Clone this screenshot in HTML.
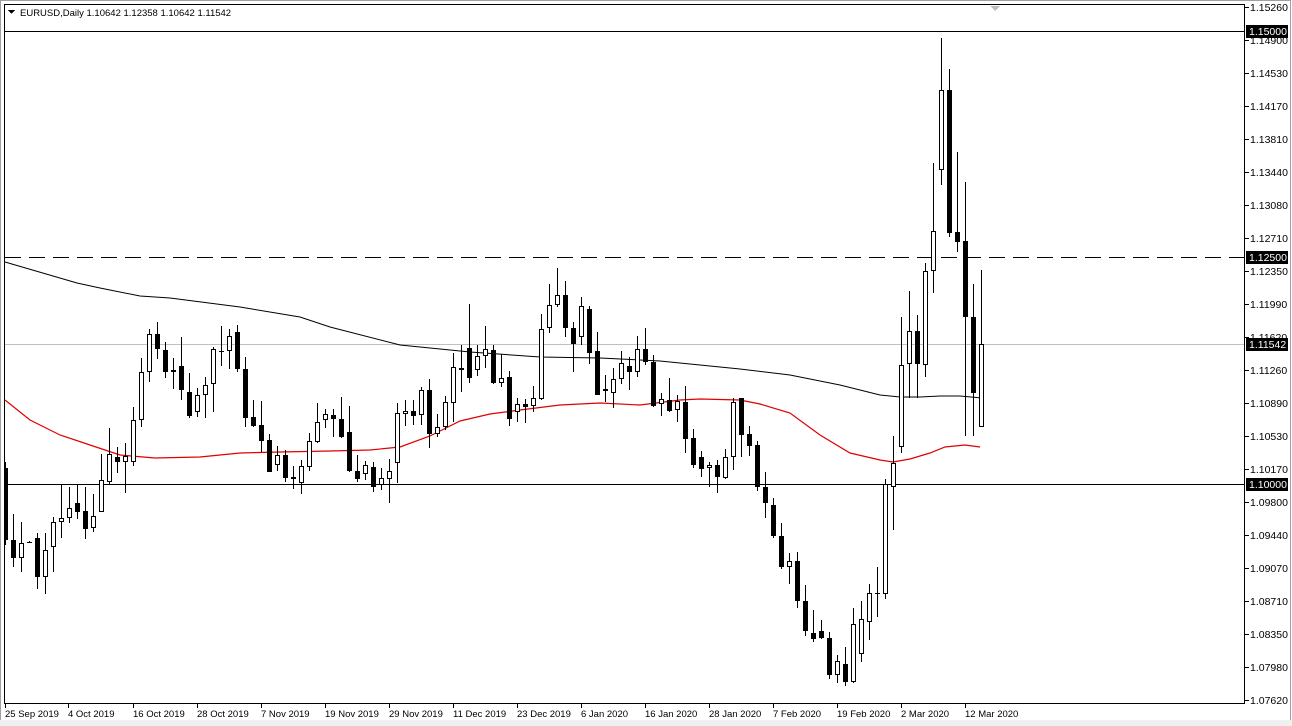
<!DOCTYPE html>
<html><head><meta charset="utf-8"><style>
html,body{margin:0;padding:0;background:#fff;}
body{width:1292px;height:726px;overflow:hidden;position:relative;font-family:"Liberation Sans",sans-serif;}
svg{position:absolute;left:0;top:0;}
text{font-family:"Liberation Sans",sans-serif;font-size:10.5px;fill:#000;}
.s{font-size:9.5px;}
</style></head><body>
<svg width="1292" height="726" viewBox="0 0 1292 726" shape-rendering="crispEdges">
<rect x="0" y="0" width="1292" height="726" fill="#fff"/>
<rect x="0.5" y="0.5" width="1290" height="724" fill="none" stroke="#a0a0a0"/>
<rect x="0" y="720" width="1292" height="6" fill="#f0f0f0"/>
<line x1="4" y1="4.5" x2="1244" y2="4.5" stroke="#000"/>
<line x1="4.5" y1="4" x2="4.5" y2="703" stroke="#000"/>
<line x1="4" y1="703.5" x2="1244" y2="703.5" stroke="#000"/>
<line x1="1244.5" y1="4" x2="1244.5" y2="704" stroke="#000"/>
<path d="M990 6h10l-5 5z" fill="#c0c0c0"/>
<line x1="5" y1="31.5" x2="1244" y2="31.5" stroke="#000"/>
<line x1="5" y1="257.5" x2="1244" y2="257.5" stroke="#000" stroke-dasharray="16,8"/>
<line x1="5" y1="344.5" x2="1244" y2="344.5" stroke="#c0c0c0"/>
<line x1="5" y1="484.5" x2="1244" y2="484.5" stroke="#000"/>
<polyline shape-rendering="auto" fill="none" stroke="#000" stroke-width="1" points="5,262 77,283 100,288 140,296 170,298 240,307 300,317 330,327 400,345 470,352 540,357 600,358 660,361 700,365 740,369 790,375 840,385 880,395 900,397 920,397 940,396 960,396 982,398"/>
<polyline shape-rendering="auto" fill="none" stroke="#e00000" stroke-width="1.2" points="5,400 30,420 60,435 90,445 120,455 155,458 200,457 240,453 280,452 330,451 370,450 400,447 430,436 460,421 490,414 520,410 560,405 600,403 640,405 680,400 700,399 740,400 760,404 790,413 820,435 850,453 880,460 893,462 910,459 930,453 945,447 965,445 980,447"/>
<path stroke="#000" fill="none" d="M5.5 462V545M13.5 514V567M21.5 522V572M29.5 541V543M37.5 533V589M45.5 533V594M53.5 517V572M61.5 484V538M69.5 487V523M77.5 484V519M85.5 487V539M93.5 494V532M101.5 454V512M109.5 428V485M117.5 447V473M125.5 443V493M133.5 407V466M141.5 358V427M149.5 329V382M157.5 322V359M165.5 342V378M173.5 358V389M181.5 337V400M189.5 373V418M197.5 388V417M205.5 377V418M213.5 347V412M221.5 326V366M229.5 329V369M237.5 325V372M245.5 357V427M253.5 400V427M261.5 401V452M269.5 434V472M277.5 446V471M285.5 450V482M293.5 466V489M301.5 460V494M309.5 433V471M317.5 403V443M325.5 409V428M333.5 409V437M341.5 397V438M349.5 406V472M357.5 455V482M365.5 461V480M373.5 462V492M381.5 468V490M389.5 459V503M397.5 403V483M405.5 400V426M413.5 400V425M421.5 387V425M429.5 379V448M437.5 414V437M445.5 396V430M453.5 353V422M461.5 345V392M469.5 304V383M477.5 345V376M485.5 326V368M493.5 345V384M501.5 354V387M509.5 371V426M517.5 398V422M525.5 399V423M533.5 386V412M541.5 314V400M549.5 284V333M557.5 268V307M565.5 281V337M573.5 322V372M581.5 297V345M589.5 306V364M597.5 332V395M605.5 375V402M613.5 368V408M621.5 351V384M629.5 357V390M637.5 336V377M645.5 328V365M653.5 355V407M661.5 393V416M669.5 378V412M677.5 395V422M685.5 386V453M693.5 429V468M701.5 451V477M709.5 462V487M717.5 460V493M725.5 449V479M733.5 398V470M741.5 398V457M749.5 426V456M757.5 441V491M765.5 472V518M773.5 498V538M781.5 523V569M789.5 553V584M797.5 552V608M805.5 585V636M813.5 610V642M821.5 620V639M829.5 632V679M837.5 655V683M845.5 647V686M853.5 608V683M861.5 601V662M869.5 584V640M877.5 567V617M885.5 479V599M893.5 436V530M901.5 317V453M909.5 291V398M917.5 315V398M925.5 263V377M933.5 163V293M941.5 38V185M949.5 69V237M957.5 152V252M965.5 182V436M973.5 284V436M981.5 270V427"/>
<path fill="#000" d="M5 468h3v72h-3zM11 540h5v18h-5zM27 542h5v1h-5zM35 538h5v39h-5zM75 503h5v9h-5zM83 511h5v18h-5zM115 457h5v5h-5zM155 334h5v15h-5zM163 350h5v22h-5zM171 370h5v2h-5zM179 366h5v24h-5zM187 392h5v24h-5zM219 351h5v1h-5zM235 332h5v37h-5zM243 369h5v49h-5zM251 417h5v9h-5zM259 425h5v16h-5zM267 440h5v32h-5zM283 455h5v23h-5zM291 477h5v2h-5zM331 415h5v4h-5zM339 419h5v18h-5zM347 432h5v39h-5zM355 471h5v8h-5zM371 467h5v20h-5zM411 411h5v5h-5zM427 390h5v44h-5zM459 368h5v2h-5zM467 348h5v30h-5zM491 350h5v33h-5zM507 377h5v42h-5zM523 404h5v3h-5zM563 295h5v33h-5zM571 328h5v16h-5zM587 309h5v44h-5zM595 351h5v44h-5zM603 389h5v2h-5zM627 366h5v6h-5zM643 349h5v13h-5zM651 362h5v44h-5zM667 400h5v11h-5zM683 402h5v37h-5zM691 438h5v27h-5zM699 457h5v12h-5zM715 465h5v12h-5zM739 398h5v37h-5zM747 434h5v12h-5zM755 445h5v42h-5zM763 487h5v16h-5zM771 505h5v31h-5zM779 536h5v31h-5zM795 561h5v40h-5zM803 601h5v30h-5zM811 633h5v6h-5zM819 631h5v7h-5zM827 638h5v37h-5zM843 664h5v18h-5zM875 593h5v1h-5zM915 331h5v33h-5zM947 90h5v143h-5zM955 232h5v10h-5zM963 241h5v76h-5zM971 317h5v76h-5z"/>
<path fill="#fff" stroke="#000" d="M19.5 543.5h4v14h-4zM43.5 550.5h4v26h-4zM51.5 522.5h4v24h-4zM59.5 518.5h4v3h-4zM67.5 508.5h4v9h-4zM91.5 516.5h4v11h-4zM99.5 480.5h4v31h-4zM107.5 454.5h4v27h-4zM123.5 456.5h4v5h-4zM131.5 420.5h4v41h-4zM139.5 372.5h4v47h-4zM147.5 334.5h4v37h-4zM195.5 395.5h4v16h-4zM203.5 385.5h4v9h-4zM211.5 349.5h4v34h-4zM227.5 336.5h4v14h-4zM275.5 455.5h4v9h-4zM299.5 466.5h4v16h-4zM307.5 441.5h4v25h-4zM315.5 422.5h4v19h-4zM323.5 414.5h4v5h-4zM363.5 465.5h4v8h-4zM379.5 478.5h4v6h-4zM387.5 471.5h4v7h-4zM395.5 413.5h4v49h-4zM403.5 411.5h4v2h-4zM419.5 390.5h4v24h-4zM435.5 427.5h4v6h-4zM443.5 402.5h4v24h-4zM451.5 367.5h4v35h-4zM475.5 356.5h4v13h-4zM483.5 349.5h4v6h-4zM499.5 378.5h4v4h-4zM515.5 404.5h4v7h-4zM531.5 398.5h4v7h-4zM539.5 329.5h4v69h-4zM547.5 305.5h4v22h-4zM555.5 295.5h4v9h-4zM579.5 306.5h4v30h-4zM611.5 379.5h4v13h-4zM619.5 363.5h4v15h-4zM635.5 349.5h4v22h-4zM659.5 399.5h4v4h-4zM675.5 401.5h4v8h-4zM707.5 465.5h4v2h-4zM723.5 457.5h4v20h-4zM731.5 402.5h4v54h-4zM787.5 561.5h4v5h-4zM835.5 661.5h4v13h-4zM851.5 624.5h4v57h-4zM859.5 619.5h4v34h-4zM867.5 593.5h4v28h-4zM883.5 484.5h4v109h-4zM891.5 463.5h4v23h-4zM899.5 365.5h4v81h-4zM907.5 331.5h4v32h-4zM923.5 271.5h4v93h-4zM931.5 231.5h4v39h-4zM939.5 90.5h4v79h-4zM979.5 344.5h4v82h-4z"/>
<path stroke="#000" d="M1245 7.5h4M1245 40.5h4M1245 73.5h4M1245 106.5h4M1245 139.5h4M1245 172.5h4M1245 205.5h4M1245 238.5h4M1245 271.5h4M1245 304.5h4M1245 337.5h4M1245 370.5h4M1245 403.5h4M1245 436.5h4M1245 469.5h4M1245 502.5h4M1245 535.5h4M1245 568.5h4M1245 601.5h4M1245 634.5h4M1245 667.5h4M1245 700.5h4M5.5 704v4M68.5 704v4M133.5 704v4M197.5 704v4M261.5 704v4M325.5 704v4M389.5 704v4M453.5 704v4M517.5 704v4M581.5 704v4M645.5 704v4M709.5 704v4M773.5 704v4M837.5 704v4M901.5 704v4M965.5 704v4"/>
<g>
<text x="1250" y="11">1.15260</text>
<text x="1250" y="44">1.14900</text>
<text x="1250" y="77">1.14530</text>
<text x="1250" y="110">1.14170</text>
<text x="1250" y="143">1.13810</text>
<text x="1250" y="176">1.13440</text>
<text x="1250" y="209">1.13080</text>
<text x="1250" y="242">1.12710</text>
<text x="1250" y="275">1.12350</text>
<text x="1250" y="308">1.11990</text>
<text x="1250" y="341">1.11620</text>
<text x="1250" y="374">1.11260</text>
<text x="1250" y="407">1.10890</text>
<text x="1250" y="440">1.10530</text>
<text x="1250" y="473">1.10170</text>
<text x="1250" y="506">1.09800</text>
<text x="1250" y="539">1.09440</text>
<text x="1250" y="572">1.09070</text>
<text x="1250" y="605">1.08710</text>
<text x="1250" y="638">1.08350</text>
<text x="1250" y="671">1.07980</text>
<text x="1250" y="704">1.07620</text>
</g>
<rect x="1246" y="25" width="42" height="13" fill="#000"/><text x="1249" y="35" style="fill:#fff">1.15000</text>
<rect x="1246" y="251" width="42" height="13" fill="#000"/><text x="1249" y="261" style="fill:#fff">1.12500</text>
<rect x="1246" y="338" width="42" height="13" fill="#000"/><text x="1249" y="348" style="fill:#fff">1.11542</text>
<rect x="1246" y="478" width="42" height="13" fill="#000"/><text x="1249" y="488" style="fill:#fff">1.10000</text>
<g class="s">
<text class="s" x="5" y="717">25 Sep 2019</text>
<text class="s" x="68" y="717">4 Oct 2019</text>
<text class="s" x="133" y="717">16 Oct 2019</text>
<text class="s" x="197" y="717">28 Oct 2019</text>
<text class="s" x="261" y="717">7 Nov 2019</text>
<text class="s" x="325" y="717">19 Nov 2019</text>
<text class="s" x="389" y="717">29 Nov 2019</text>
<text class="s" x="453" y="717">11 Dec 2019</text>
<text class="s" x="517" y="717">23 Dec 2019</text>
<text class="s" x="581" y="717">6 Jan 2020</text>
<text class="s" x="645" y="717">16 Jan 2020</text>
<text class="s" x="709" y="717">28 Jan 2020</text>
<text class="s" x="773" y="717">7 Feb 2020</text>
<text class="s" x="837" y="717">19 Feb 2020</text>
<text class="s" x="901" y="717">2 Mar 2020</text>
<text class="s" x="965" y="717">12 Mar 2020</text>
</g>
<path d="M8 10h7l-3.5 4z" fill="#000"/>
<text class="s" x="20" y="16">EURUSD,Daily  1.10642 1.12358 1.10642 1.11542</text>
</svg>
</body></html>
